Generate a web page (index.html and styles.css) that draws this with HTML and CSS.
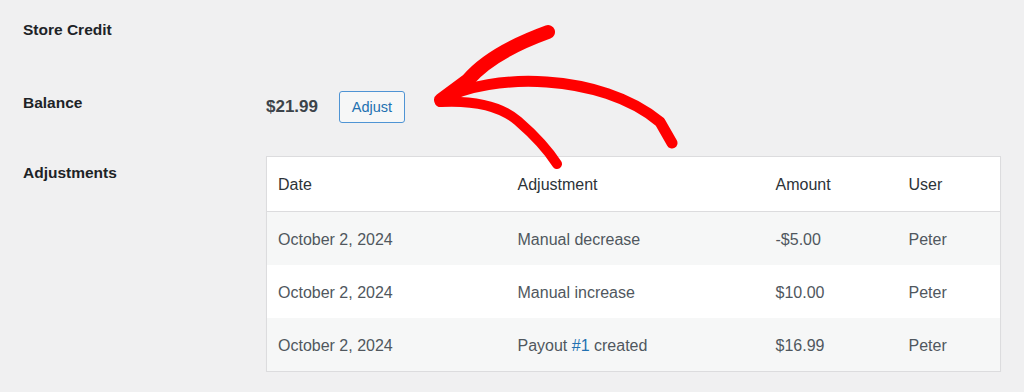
FILE: index.html
```html
<!DOCTYPE html>
<html>
<head>
<meta charset="utf-8">
<link rel="stylesheet" href="styles.css">
</head>
<body>
<div class="page">
  <h2 class="title">Store Credit</h2>
  <div class="row balance-row">
    <div class="label">Balance</div>
    <div class="value">
      <span class="amount">$21.99</span>
      <button class="btn">Adjust</button>
    </div>
  </div>
  <div class="row adj-row">
    <div class="label label-adj">Adjustments</div>
    <table class="tbl">
      <colgroup>
        <col class="c1"><col class="c2"><col class="c3"><col class="c4">
      </colgroup>
      <thead>
        <tr><th>Date</th><th>Adjustment</th><th>Amount</th><th>User</th></tr>
      </thead>
      <tbody>
        <tr class="alt"><td>October 2, 2024</td><td>Manual decrease</td><td>-$5.00</td><td>Peter</td></tr>
        <tr><td>October 2, 2024</td><td>Manual increase</td><td>$10.00</td><td>Peter</td></tr>
        <tr class="alt"><td>October 2, 2024</td><td>Payout <a href="#" class="link">#1</a> created</td><td>$16.99</td><td>Peter</td></tr>
      </tbody>
    </table>
  </div>
</div>
<svg class="arrow" width="1024" height="392" viewBox="0 0 1024 392">
  <g fill="none" stroke="#ff0000" stroke-linecap="round" stroke-linejoin="round">
    <path d="M548 32 C 515 44, 485 60, 468 80 L 441 100" stroke-width="14"/>
    <path d="M443 99 C 490 73, 600 72, 660 122 L 672 143" stroke-width="11"/>
    <path d="M440 102 C 478 100, 503 108, 518 121 C 533 134, 548 150, 557 164" stroke-width="10"/>
  </g>
</svg>
</body>
</html>
```
FILE: styles.css
```css
html, body {
  margin: 0;
  padding: 0;
  background: #f0f0f1;
  font-family: "Liberation Sans", Arial, sans-serif;
  color: #1d2327;
}
.page {
  padding: 20px 23px 0 23px;
}
.title {
  margin: 0;
  font-size: 15.5px;
  line-height: 20px;
  font-weight: bold;
  color: #1d2327;
}
.row {
  display: grid;
  grid-template-columns: 243px 735px;
}
.balance-row {
  margin-top: 51px;
}
.label {
  font-size: 15.5px;
  line-height: 20px;
  font-weight: bold;
  color: #1d2327;
  padding-top: 2px;
}
.value {
  display: flex;
  align-items: center;
  gap: 21px;
}
.amount {
  font-size: 17px;
  font-weight: bold;
  color: #3c434a;
}
.btn {
  height: 32px;
  width: 66px;
  padding: 0;
  border: 1px solid #4f94d4;
  border-radius: 3px;
  background: #f6f7f7;
  color: #2271b1;
  font-family: inherit;
  font-size: 14.5px;
}
.adj-row {
  margin-top: 33px;
}
.label-adj {
  padding-top: 7px;
}
.tbl {
  width: 735px;
  table-layout: fixed;
  border-collapse: collapse;
  border: 1px solid #dcdcde;
  background: #fff;
  box-shadow: 0 1px 1px rgba(0,0,0,0.04);
  font-size: 16px;
}
.c1 { width: 240px; }
.c2 { width: 258px; }
.c3 { width: 133px; }
.c4 { width: auto; }
.tbl th {
  text-align: left;
  font-weight: normal;
  color: #2c3338;
  line-height: 24px;
  padding: 16px 11px 14px 11px;
  border-bottom: 1px solid #dcdcde;
}
.tbl td {
  color: #50575e;
  line-height: 23px;
  padding: 16px 11px 14px 11px;
}
.tbl tr.alt td {
  background: #f6f7f7;
}
.link {
  color: #2271b1;
  text-decoration: none;
}
.arrow {
  position: absolute;
  left: 0;
  top: 0;
  pointer-events: none;
}
```
